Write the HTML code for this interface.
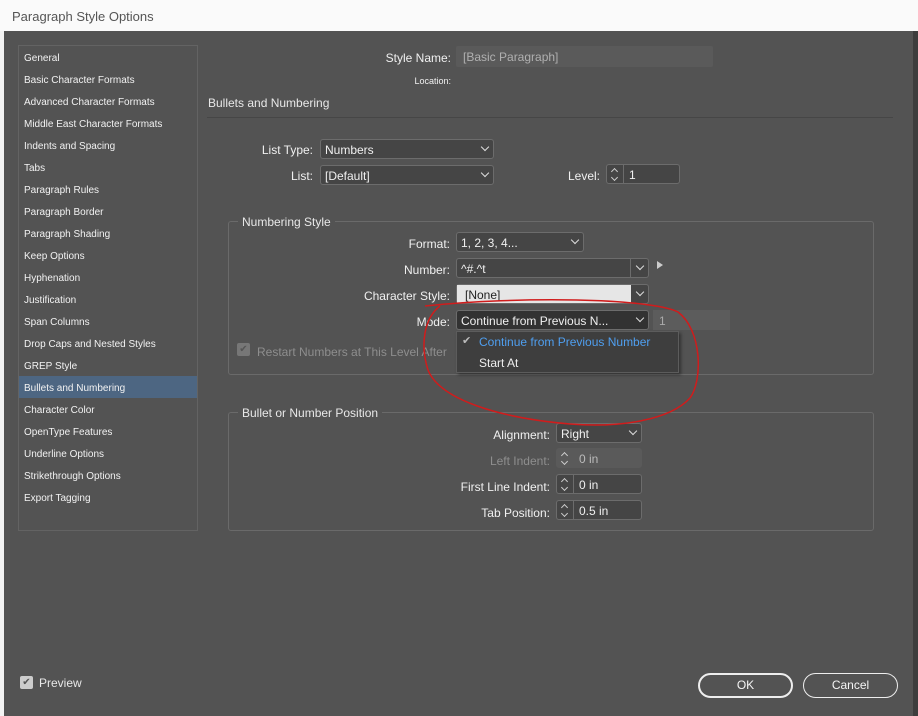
<!DOCTYPE html>
<html><head><style>
*{box-sizing:border-box;margin:0;padding:0}
body{width:918px;height:716px;overflow:hidden;background:#535353;font-family:"Liberation Sans",sans-serif;position:relative;color:#e8e8e8}
.a{position:absolute;white-space:nowrap}
.lbl{position:absolute;font-size:12px;text-align:right;white-space:nowrap;color:#f0f0f0}
.side{font-size:10px;color:#f2f2f2;position:absolute;left:24px}
.dd{position:absolute;height:20px;background:#454545;border:1px solid #6c6c6c;border-radius:3px;font-size:12px;padding:3px 0 0 4px;color:#f0f0f0}
.chev{position:absolute;right:5px;top:4px;width:6px;height:6px;border-right:1px solid #ddd;border-bottom:1px solid #ddd;transform:rotate(45deg)}
.sp{position:absolute;height:20px;background:#454545;border:1px solid #6c6c6c;border-radius:3px;font-size:12px;color:#f0f0f0}
.sp .ar{position:absolute;left:0;top:0;width:17px;height:18px;border-right:1px solid #6c6c6c}
.sp .ar:before{content:"";position:absolute;left:5px;top:4px;width:4px;height:4px;border-left:1px solid #ccc;border-top:1px solid #ccc;transform:rotate(45deg)}
.sp .ar:after{content:"";position:absolute;left:5px;top:10px;width:4px;height:4px;border-right:1px solid #ccc;border-bottom:1px solid #ccc;transform:rotate(45deg)}
.sp span{position:absolute;left:22px;top:3px}
.grp{position:absolute;border:1px solid #6a6a6a;border-radius:3px}
.btn{position:absolute;height:25px;border:2px solid #eee;border-radius:13px;font-size:12px;text-align:center;line-height:21px;color:#f4f4f4}
</style></head><body>
<div class="a" style="left:0;top:0;width:918px;height:31px;background:#fafafa"></div>
<div class="a" style="left:12px;top:9px;font-size:13px;color:#555">Paragraph Style Options</div>
<div class="a" style="left:0;top:31px;width:4px;height:685px;background:#f3f3f3"></div>
<div class="a" style="left:913px;top:31px;width:5px;height:685px;background:#3d3d3d"></div>

<div class="a" style="left:18px;top:45px;width:180px;height:486px;border:1px solid #636363;background:#535353"></div>
<div class="a" style="left:19px;top:376px;width:178px;height:22px;background:#4d6682"></div>
<div class="side" style="top:53px">General</div>
<div class="side" style="top:75px">Basic Character Formats</div>
<div class="side" style="top:97px">Advanced Character Formats</div>
<div class="side" style="top:119px">Middle East Character Formats</div>
<div class="side" style="top:141px">Indents and Spacing</div>
<div class="side" style="top:163px">Tabs</div>
<div class="side" style="top:185px">Paragraph Rules</div>
<div class="side" style="top:207px">Paragraph Border</div>
<div class="side" style="top:229px">Paragraph Shading</div>
<div class="side" style="top:251px">Keep Options</div>
<div class="side" style="top:273px">Hyphenation</div>
<div class="side" style="top:295px">Justification</div>
<div class="side" style="top:317px">Span Columns</div>
<div class="side" style="top:339px">Drop Caps and Nested Styles</div>
<div class="side" style="top:361px">GREP Style</div>
<div class="side" style="top:383px">Bullets and Numbering</div>
<div class="side" style="top:405px">Character Color</div>
<div class="side" style="top:427px">OpenType Features</div>
<div class="side" style="top:449px">Underline Options</div>
<div class="side" style="top:471px">Strikethrough Options</div>
<div class="side" style="top:493px">Export Tagging</div>

<div class="lbl" style="right:467px;top:51px">Style Name:</div>
<div class="a" style="left:456px;top:46px;width:257px;height:21px;background:#5a5a5a;border-radius:2px;font-size:12px;color:#b0b0b0;padding:4px 0 0 7px">[Basic Paragraph]</div>
<div class="lbl" style="right:467px;top:76px;font-size:9px">Location:</div>
<div class="a" style="left:208px;top:96px;font-size:12px">Bullets and Numbering</div>
<div class="a" style="left:207px;top:117px;width:686px;height:1px;background:#464646"></div>

<div class="lbl" style="right:605px;top:143px">List Type:</div>
<div class="dd" style="left:320px;top:139px;width:174px">Numbers<i class="chev"></i></div>
<div class="lbl" style="right:605px;top:169px">List:</div>
<div class="dd" style="left:320px;top:165px;width:174px">[Default]<i class="chev"></i></div>
<div class="lbl" style="right:318px;top:169px">Level:</div>
<div class="sp" style="left:606px;top:164px;width:74px"><i class="ar"></i><span>1</span></div>

<div class="grp" style="left:228px;top:221px;width:646px;height:154px"></div>
<div class="a" style="left:238px;top:215px;background:#535353;padding:0 4px;font-size:12px">Numbering Style</div>
<div class="lbl" style="right:468px;top:237px">Format:</div>
<div class="dd" style="left:456px;top:232px;width:128px">1, 2, 3, 4...<i class="chev"></i></div>
<div class="lbl" style="right:468px;top:263px">Number:</div>
<div class="dd" style="left:456px;top:258px;width:193px">^#.^t<i class="a" style="left:173px;top:0;width:1px;height:18px;background:#6c6c6c"></i><i class="chev"></i></div>
<div class="a" style="left:657px;top:261px;width:0;height:0;border-left:6px solid #ccc;border-top:4px solid transparent;border-bottom:4px solid transparent"></div>
<div class="lbl" style="right:468px;top:289px">Character Style:</div>
<div class="dd" style="left:456px;top:284px;width:193px;background:#454545"><i class="a" style="left:0;top:0;width:174px;height:18px;background:#e6e6e6"></i><span class="a" style="left:8px;top:3px;color:#222">[None]</span><i class="chev"></i></div>
<div class="lbl" style="right:468px;top:315px">Mode:</div>
<div class="dd" style="left:456px;top:310px;width:193px;background:#323232">Continue from Previous N...<i class="chev"></i></div>
<div class="a" style="left:653px;top:310px;width:77px;height:20px;background:#5c5c5c;font-size:12px;color:#aaa;padding:4px 0 0 6px">1</div>
<div class="a" style="left:237px;top:343px;width:13px;height:13px;background:#777;border-radius:2px;font-size:10px;color:#555;text-align:center;line-height:13px">✔</div>
<div class="a" style="left:257px;top:345px;font-size:12px;color:#8e8e8e">Restart Numbers at This Level After</div>
<div class="a" style="left:456px;top:331px;width:223px;height:42px;background:#3e3e3e;border:1px solid #5c5c5c;box-shadow:2px 2px 3px rgba(0,0,0,.4)"></div>
<div class="a" style="left:462px;top:334px;font-size:11px;color:#bbb">✔</div>
<div class="a" style="left:479px;top:335px;font-size:12px;color:#4f9ff0">Continue from Previous Number</div>
<div class="a" style="left:479px;top:356px;font-size:12px;color:#eee">Start At</div>

<div class="grp" style="left:228px;top:412px;width:646px;height:119px"></div>
<div class="a" style="left:238px;top:406px;background:#535353;padding:0 4px;font-size:12px">Bullet or Number Position</div>
<div class="lbl" style="right:368px;top:428px">Alignment:</div>
<div class="dd" style="left:556px;top:423px;width:86px">Right<i class="chev"></i></div>
<div class="lbl" style="right:368px;top:454px;color:#8e8e8e">Left Indent:</div>
<div class="sp" style="left:556px;top:448px;width:86px;background:#5a5a5a;border-color:#5a5a5a;color:#bbb"><i class="ar" style="border-color:#5a5a5a"></i><span>0 in</span></div>
<div class="lbl" style="right:368px;top:480px">First Line Indent:</div>
<div class="sp" style="left:556px;top:474px;width:86px"><i class="ar"></i><span>0 in</span></div>
<div class="lbl" style="right:368px;top:506px">Tab Position:</div>
<div class="sp" style="left:556px;top:500px;width:86px"><i class="ar"></i><span>0.5 in</span></div>

<svg class="a" style="left:0;top:0" width="918" height="716"><path d="M425 306 C520 296 650 298 678 312 C702 330 703 380 690 398 C670 420 620 428 570 424 C500 418 440 400 428 370 C420 345 424 318 440 306" fill="none" stroke="#d01c1c" stroke-width="1.5"/></svg>

<div class="a" style="left:20px;top:676px;width:13px;height:13px;background:#ccc;border-radius:2px;font-size:10px;color:#555;text-align:center;line-height:13px">✔</div>
<div class="a" style="left:39px;top:676px;font-size:12px">Preview</div>
<div class="btn" style="left:698px;top:673px;width:95px">OK</div>
<div class="btn" style="left:803px;top:673px;width:95px;border-width:1px;line-height:23px">Cancel</div>
</body></html>
